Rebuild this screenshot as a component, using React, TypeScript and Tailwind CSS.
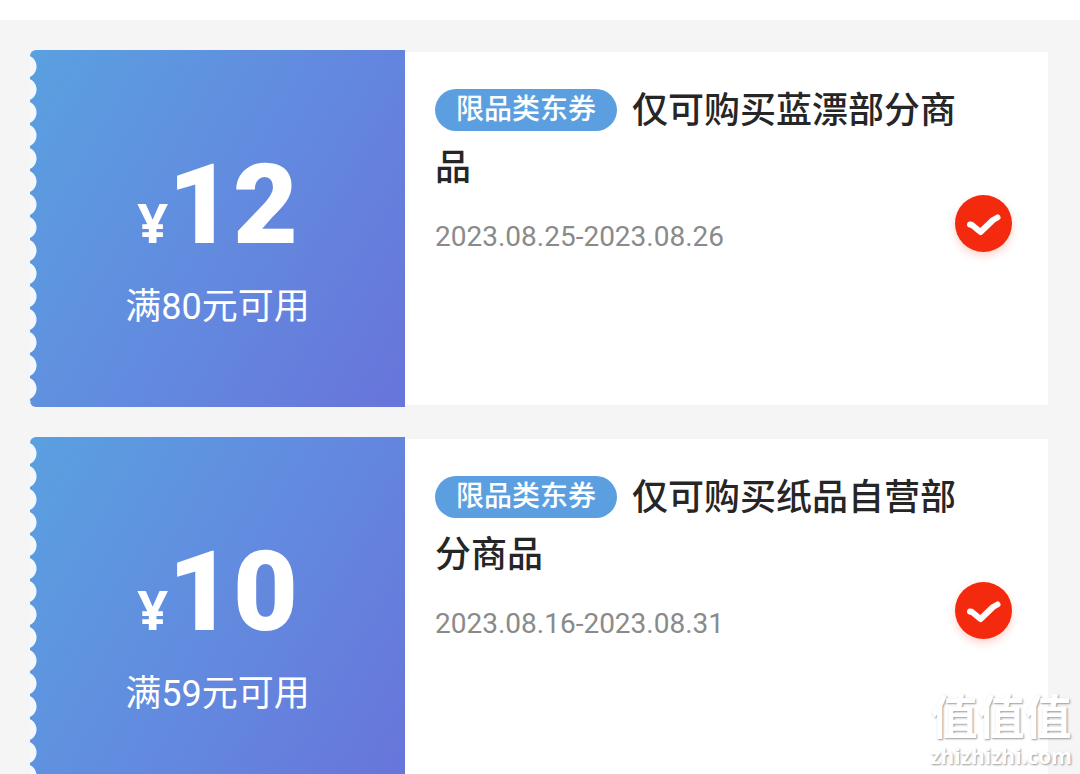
import React, { useState } from "react";

interface Coupon {
  id: string;
  amount: number;
  threshold: string;
  tag: string;
  title: string;
  period: string;
}

const coupons: Coupon[] = [
  {
    id: "blue-rinse",
    amount: 12,
    threshold: "满80元可用",
    tag: "限品类东券",
    title: "仅可购买蓝漂部分商品",
    period: "2023.08.25-2023.08.26",
  },
  {
    id: "paper",
    amount: 10,
    threshold: "满59元可用",
    tag: "限品类东券",
    title: "仅可购买纸品自营部分商品",
    period: "2023.08.16-2023.08.31",
  },
];

function CouponCheck({ label }: { label: string }) {
  const [checked, setChecked] = useState(true);
  return (
    <label className="relative block size-[57px] shrink-0 cursor-pointer">
      <input
        type="checkbox"
        aria-label={label}
        checked={checked}
        onChange={(e) => setChecked(e.target.checked)}
        className="block size-full appearance-none rounded-full border-2 border-gray-300 bg-white checked:border-0 checked:bg-[#f42a0e] checked:shadow-[0_4px_8px_rgba(244,42,14,0.2)]"
      />
      {checked && (
        <svg
          viewBox="0 0 57 57"
          className="pointer-events-none absolute inset-0 size-full"
          fill="none"
          stroke="white"
          strokeWidth="6"
          strokeLinecap="round"
          strokeLinejoin="round"
          aria-hidden="true"
        >
          <path d="M15 29.5 L17 30 L25.5 37 L38 25 L42.5 22.5" />
        </svg>
      )}
    </label>
  );
}

function CouponCard({ coupon }: { coupon: Coupon }) {
  return (
    <article className="flex min-h-[357px] shrink-0">
      <div className="flex w-[375px] shrink-0 rounded-l-md bg-[linear-gradient(120deg,#5aa0e0_0%,#628bdf_50%,#6874da_100%)]">
        <div className="my-[5px] w-2 shrink-0 bg-[radial-gradient(circle_at_-5px_50%,#f5f8fb_11px,transparent_12px)] bg-[length:8px_23px] bg-repeat-y" />
        <div className="flex grow flex-col items-center pt-[91px] pr-2 text-white">
          <p className="flex items-baseline font-black">
            <span className="font-['Noto_Sans',sans-serif] text-[54px] leading-none font-bold">¥</span>
            <span className="text-[112px] leading-[128px]">{coupon.amount}</span>
          </p>
          <p className="mt-3 text-[36px] leading-[52px]">{coupon.threshold}</p>
        </div>
      </div>
      <div className="my-0.5 flex min-w-0 grow items-start bg-white pr-9 pl-[30px]">
        <div className="-mr-2 min-w-0 grow pt-[31px]">
          <div>
            <span className="float-left mt-1.5 mr-[15px] rounded-full bg-[#5c9fe0] px-[21px] text-[28px] leading-[42px] font-medium text-white">
              {coupon.tag}
            </span>
            <h2 className="text-[36px] leading-[57px] font-medium text-[#262626]">{coupon.title}</h2>
          </div>
          <p className="mt-5 text-[28px] leading-[40px] text-[#8a8a8a]">{coupon.period}</p>
        </div>
        <div className="pt-[143px]">
          <CouponCheck label={coupon.title} />
        </div>
      </div>
    </article>
  );
}

export default function App() {
  return (
    <div className="relative h-screen overflow-hidden bg-[#f5f5f5] font-[Roboto,'Noto_Sans_CJK_SC',sans-serif]">
      <div className="h-5 bg-white" />
      <main className="flex flex-col gap-[30px] pt-[30px] pr-8 pl-[30px]">
        {coupons.map((coupon) => (
          <CouponCard key={coupon.id} coupon={coupon} />
        ))}
      </main>
      <div className="pointer-events-none absolute right-2 bottom-1.5 flex flex-col items-center font-bold text-white [text-shadow:1px_1px_2px_#999999]">
        <span className="text-[47px] leading-[52px]">值值值</span>
        <span className="font-['Open_Sans',sans-serif] text-[21px] leading-[24px]">zhizhizhi.com</span>
      </div>
    </div>
  );
}
